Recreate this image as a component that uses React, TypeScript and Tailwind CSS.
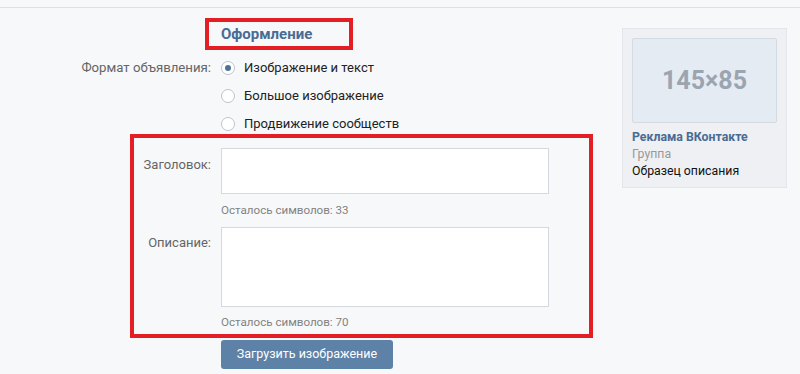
function Radio({ checked, label }: { checked?: boolean; label: string }) {
  return (
    <div className="flex h-[20px] items-center">
      <span className="flex h-[14px] w-[14px] items-center justify-center rounded-full border border-[#bcc5ce] bg-white">
        {checked && <span className="h-[6px] w-[6px] rounded-full bg-[#4f7199]" />}
      </span>
      <span className="ml-[9px] text-[13px] text-[#222]">{label}</span>
    </div>
  );
}

function AdPreview() {
  return (
    <div className="mt-[20px] h-[160px] w-[165px] border border-[#e3e6ea] bg-[#eef0f3] p-[9px]">
      <div className="flex h-[85px] w-[145px] items-center justify-center rounded-[2px] border border-[#d3dae2] bg-[#e5ebf2]">
        <span className="text-[25px] font-bold text-[#9aa5b1]">145×85</span>
      </div>
      <div className="mt-[6px] text-[12.3px] leading-[17px]">
        <div className="font-bold text-[#4a6b93]">Реклама ВКонтакте</div>
        <div className="text-[#999]">Группа</div>
        <div className="text-[#111]">Образец описания</div>
      </div>
    </div>
  );
}

export default function App() {
  return (
    <div className="min-h-screen bg-[#f7f8fa] font-['Roboto',sans-serif]">
      <div className="h-[8px] border-b border-[#dce1e6]" />
      <div className="flex">
        <div className="w-[622px]">
          <div className="ml-[205px] mt-[10px] flex h-[32px] w-[148px] items-center border-4 border-[#e31e24] pl-[12px]">
            <span className="text-[15px] font-bold text-[#4a6b93]">Оформление</span>
          </div>

          <div className="mt-[8px] grid grid-cols-[211px_1fr] gap-x-[10px] gap-y-[8px]">
            <div className="flex h-[20px] items-center justify-end text-[13.2px] text-[#656565]">Формат объявления:</div>
            <Radio checked label="Изображение и текст" />
            <div />
            <Radio label="Большое изображение" />
            <div />
            <Radio label="Продвижение сообществ" />
          </div>

          <div className="ml-[130px] w-[463px] border-4 border-[#e31e24] pb-[4px] pt-[10px]">
            <div className="grid grid-cols-[77px_328px] gap-x-[10px]">
              <div className="pt-[9px] text-right text-[13px] leading-[16px] text-[#656565]">Заголовок:</div>
              <div>
                <div className="h-[46px] border border-[#d3d9de] bg-white" />
                <div className="mt-[8px] text-[11.6px] leading-[16px] text-[#828282]">Осталось символов: 33</div>
              </div>
              <div className="mt-[9px] pt-[8px] text-right text-[13px] leading-[16px] text-[#656565]">Описание:</div>
              <div className="mt-[9px]">
                <div className="h-[80px] border border-[#d3d9de] bg-white" />
                <div className="mt-[7px] text-[11.6px] leading-[16px] text-[#828282]">Осталось символов: 70</div>
              </div>
            </div>
          </div>

          <button className="ml-[221px] mt-[2px] flex h-[29px] w-[172px] items-center justify-center rounded-[3px] bg-[#5e81a8] text-[12.5px] text-white">
            Загрузить изображение
          </button>
        </div>
        <AdPreview />
      </div>
    </div>
  );
}
